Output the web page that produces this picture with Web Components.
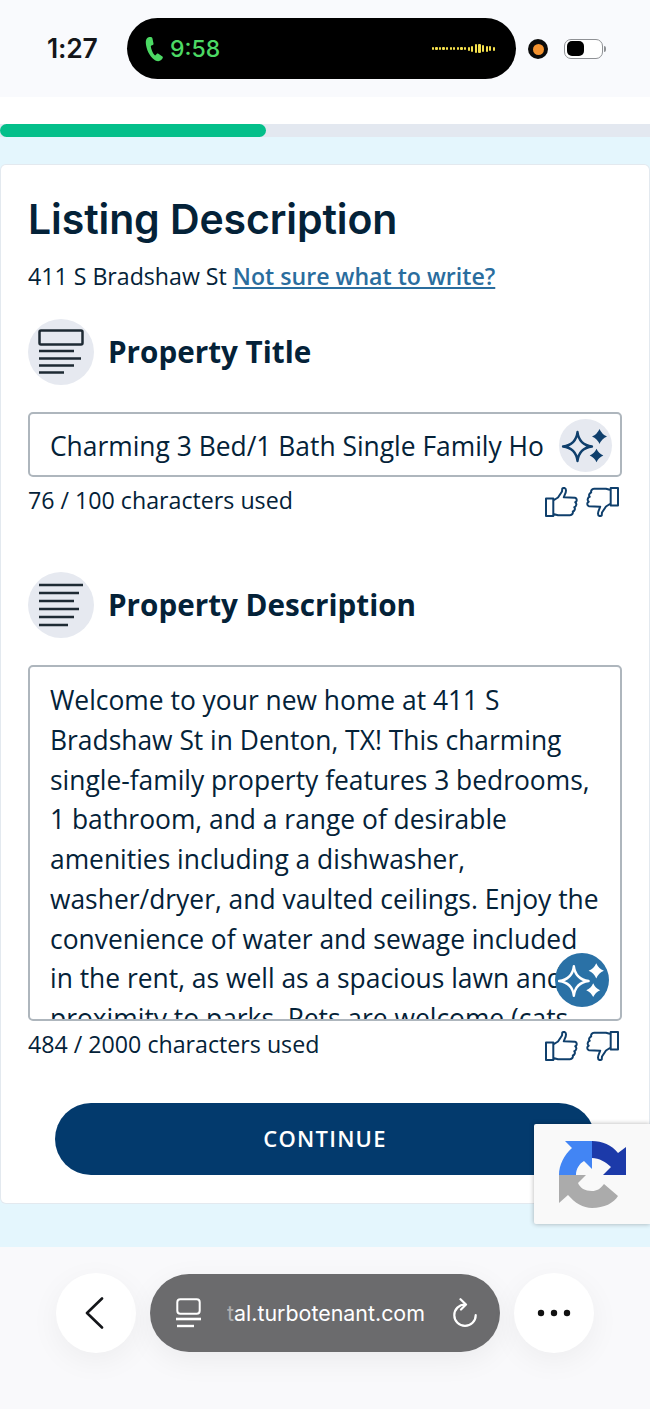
<!DOCTYPE html>
<html>
<head>
<meta charset="utf-8">
<title>Listing Description</title>
<style>
  html, body { margin: 0; padding: 0; }
  body { width: 650px; height: 1409px; overflow: hidden; position: relative; background: #e3f5fc; font-family: "Open Sans", sans-serif; color: #042238; }
</style>
</head>
<body>
<status-bar></status-bar>
<progress-strip></progress-strip>
<main-area>
  <listing-card>
    <section-head kind="title">Property Title</section-head>
    <text-box kind="single">Charming 3 Bed/1 Bath Single Family Ho</text-box>
    <feedback-row>76 / 100 characters used</feedback-row>
    <section-head kind="description" style="margin-top:51px">Property Description</section-head>
    <text-box kind="multi">Welcome to your new home at 411 S<br>Bradshaw St in Denton, TX! This charming<br>single-family property features 3 bedrooms,<br>1 bathroom, and a range of desirable<br>amenities including a dishwasher,<br>washer/dryer, and vaulted ceilings. Enjoy the<br>convenience of water and sewage included<br>in the rent, as well as a spacious lawn and<br>proximity to parks. Pets are welcome (cats</text-box>
    <feedback-row>484 / 2000 characters used</feedback-row>
    <continue-button>CONTINUE</continue-button>
  </listing-card>
</main-area>
<browser-bar></browser-bar>
<captcha-badge></captcha-badge>

<script>
// small star shape used by the AI button
function star(cx, cy, r, k) {
  const c = r * k;
  return `M${cx} ${cy - r}Q${cx + c} ${cy - c} ${cx + r} ${cy}Q${cx + c} ${cy + c} ${cx} ${cy + r}Q${cx - c} ${cy + c} ${cx - r} ${cy}Q${cx - c} ${cy - c} ${cx} ${cy - r}Z`;
}

class StatusBar extends HTMLElement {
  constructor() {
    super();
    const heights = [3,3,3,3,3,3,3,3,3,3,4,6,9,9,7,6,5,4];
    this.attachShadow({ mode: 'open' }).innerHTML = `
      <style>
        :host { display: flex; align-items: center; height: 97px; background: #f9fafd; box-sizing: border-box; padding: 0 0 0 47px; font-family: Inter, sans-serif; }
        .time { width: 80px; font-size: 26.500px; font-weight: 600; color: #14161a; margin-top: -1px; letter-spacing: -.2px; }
        .pill { width: 389px; height: 61px; margin-top: 0; background: #000; border-radius: 31px; display: flex; align-items: center; box-sizing: border-box; padding: 0 21px 0 18px; }
        .call { font-size: 23px; font-weight: 500; color: #4cd964; margin-left: 6px; }
        .wave { margin-left: auto; display: flex; align-items: center; gap: 1.300px; }
        .wave i { display: block; width: 2.300px; background: #f4e04d; border-radius: 1px; }
        .dot { width: 20px; height: 20px; border-radius: 50%; background: #0b0b0b; margin-left: 12px; display: flex; align-items: center; justify-content: center; margin-top: 1px; }
        .dot i { display: block; width: 11px; height: 11px; background: #f4922f; border-radius: 50%; }
        .battery { width: 39px; height: 20px; box-sizing: border-box; border: 1.500px solid #8f9195; border-radius: 7px; margin-left: 16px; padding: 1.500px 2px; background: #fff; }
        .battery i { display: block; width: 17px; height: 100%; background: #000; border-radius: 5px; }
        .nub { width: 2px; height: 6px; background: #8f9195; margin-left: 1px; border-radius: 0 2px 2px 0; }
      </style>
      <div class="time">1:27</div>
      <div class="pill">
        <svg width="19" height="26" viewBox="0 0 19 26"><path d="M3.500 1.200C1.600 2 .6 4 .8 7c.4 6 3.500 13 8.200 16.600 2 1.600 4.400 2 6.300 1 1.200-.6 2.200-1.800 2.500-2.800.2-.7-.1-1.100-.7-1.500l-3.700-2.500c-.7-.4-1.200-.3-1.700.2l-1 1.100c-.4.400-.8.400-1.200 0-2-2.300-3.200-5.400-3.700-8.500-.1-.5.100-.8.600-1l1.400-.6c.6-.3.800-.8.700-1.500L7.400 2.300C7.200 1 5.200.5 3.500 1.200Z" fill="#4cd964"/></svg>
        <span class="call">9:58</span>
        <div class="wave">${heights.map(h => `<i style="height:${h}px"></i>`).join('')}</div>
      </div>
      <div class="dot"><i></i></div>
      <div class="battery"><i></i></div>
      <div class="nub"></div>`;
  }
}

class ProgressStrip extends HTMLElement {
  constructor() {
    super();
    this.attachShadow({ mode: 'open' }).innerHTML = `
      <style>
        :host { display: block; background: #fff; padding-top: 27px; }
        .track { height: 13px; background: #e3e8f0; }
        .fill { width: 266px; height: 100%; background: #04bf8a; border-radius: 7px; }
      </style>
      <div class="track"><div class="fill"></div></div>`;
  }
}

class MainArea extends HTMLElement {
  constructor() {
    super();
    this.attachShadow({ mode: 'open' }).innerHTML = `
      <style>
        :host { display: block; height: 1110px; box-sizing: border-box; padding: 28px 1px 0; background: #e4f6fd; }
      </style>
      <slot></slot>`;
  }
}

class ListingCard extends HTMLElement {
  constructor() {
    super();
    this.attachShadow({ mode: 'open' }).innerHTML = `
      <style>
        :host { display: block; height: 1038px; box-sizing: border-box; padding: 24px 27px 0; background: #fff; border-radius: 5px; box-shadow: 0 0 0 1px #e3e9ef; }
        h1 { margin: 0; height: 60px; line-height: 60px; font-family: Inter, sans-serif; font-size: 41px; font-weight: 600; color: #042238; letter-spacing: -.1px; white-space: nowrap; }
        p { margin: 10px 0 26px; height: 34px; line-height: 34px; font-size: 23.150px; color: #042238; white-space: nowrap; }
        a { color: #2a6d9e; font-weight: 600; text-decoration: underline; }
      </style>
      <h1>Listing Description</h1>
      <p>411 S Bradshaw St <a>Not sure what to write?</a></p>
      <slot></slot>`;
  }
}

class SectionHead extends HTMLElement {
  constructor() {
    super();
    const title = `<rect x="11.500" y="11.500" width="43" height="14" rx="1.500" fill="none" stroke="#1e2a33" stroke-width="2.500"/>
      <path d="M11 32H46M11 39.500H53M11 46.500H46M11 53.500H36" stroke="#1e2a33" stroke-width="2.500"/>`;
    const desc = `<path d="M11 13H55M11 21H51M11 29H46M11 37H51M11 45H46M11 53H40" stroke="#1e2a33" stroke-width="2.500"/>`;
    this.attachShadow({ mode: 'open' }).innerHTML = `
      <style>
        :host { display: flex; align-items: center; gap: 14px; height: 66px; font-size: 29.650px; font-weight: 700; color: #042238; }
        svg { flex: none; }
        span { margin-top: -2px; }
      </style>
      <svg width="66" height="66" viewBox="0 0 66 66"><circle cx="33" cy="33" r="33" fill="#e6e9f0"/>${this.getAttribute('kind') === 'title' ? title : desc}</svg>
      <span><slot></slot></span>`;
  }
}

class TextBox extends HTMLElement {
  constructor() {
    super();
    const multi = this.getAttribute('kind') === 'multi';
    const ink = multi ? '#fff' : '#0f3f6c';
    this.attachShadow({ mode: 'open' }).innerHTML = `
      <style>
        :host { display: block; position: relative; margin-top: 27px; height: ${multi ? 356 : 65}px; box-sizing: border-box; border: 2px solid #aeb6bd; border-radius: 5px; background: #fff; font-size: 26.400px; color: #042238; }
        .text { box-sizing: border-box; height: 100%; overflow: hidden; white-space: nowrap; line-height: ${multi ? '39.750px' : '65px'}; padding: ${multi ? '14px 0 0 20px' : '0 0 0 20px'}; }
        button { position: absolute; border: 0; padding: 0; border-radius: 50%; display: block; background: ${multi ? '#2a71a6' : '#e6e9f0'}; right: ${multi ? 11 : 8}px; top: ${multi ? 286 : 5}px; width: ${multi ? 54 : 53}px; height: ${multi ? 54 : 53}px; }
        svg { display: block; width: 100%; height: 100%; }
      </style>
      <div class="text"><slot></slot></div>
      <button>
        <svg viewBox="-26.500 -26.500 53 53">
          <path d="${star(-8, 1, 14.500, .11)}" fill="none" stroke="${ink}" stroke-width="2.300" stroke-linejoin="round"/>
          <path d="${star(14, -9, 7.500, .3)}" fill="${ink}"/>
          <path d="${star(11, 10, 6.800, .3)}" fill="${ink}"/>
        </svg>
      </button>`;
  }
}

class FeedbackRow extends HTMLElement {
  constructor() {
    super();
    const thumb = `<path d="M1 11.500H8.300V29H1ZM8.300 13.500L13 10.500L17 4.500L17.300 1.500C19 .3 21 1 21 3.500C21 6 19.500 8 18.800 10.300L30 10.800C32.300 11.300 32.300 14.500 30.300 15.300C32 16.300 31.500 19.700 29.300 20.200C30.500 21.500 29.800 24 27.800 24.500C28.300 26 27.300 28.200 25 28.200L13 28.200L8.300 27" fill="none" stroke="#0f3f6c" stroke-width="2" stroke-linejoin="round"/>`;
    this.attachShadow({ mode: 'open' }).innerHTML = `
      <style>
        :host { display: flex; align-items: center; justify-content: space-between; height: 40px; margin-top: 4px; font-size: 23.200px; color: #042238; }
        .label { margin-top: -2px; }
        .icons { display: flex; gap: 6px; margin-right: 3px; margin-top: 1px; }
        svg { display: block; }
      </style>
      <span class="label"><slot></slot></span>
      <div class="icons">
        <svg width="34" height="30" viewBox="0 0 34 30">${thumb}</svg>
        <svg width="34" height="30" viewBox="0 0 34 30" style="transform: rotate(180deg)">${thumb}</svg>
      </div>`;
  }
}

class ContinueButton extends HTMLElement {
  constructor() {
    super();
    this.attachShadow({ mode: 'open' }).innerHTML = `
      <style>
        :host { display: flex; align-items: center; justify-content: center; height: 72px; margin: 38px 27px 0; background: #033a6d; border-radius: 36px; color: #fff; font-size: 22px; font-weight: 600; letter-spacing: 1.250px; }
        span { margin-top: -2px; }
      </style>
      <span><slot></slot></span>`;
  }
}

class BrowserBar extends HTMLElement {
  constructor() {
    super();
    this.attachShadow({ mode: 'open' }).innerHTML = `
      <style>
        :host { display: flex; align-items: flex-start; gap: 14px; box-sizing: border-box; height: 162px; padding: 26px 0 0 56px; background: #f9f9fb; font-family: Inter, sans-serif; }
        .round { width: 80px; height: 80px; border-radius: 50%; background: #fff; box-shadow: 0 8px 30px rgba(0,0,0,.05); display: flex; align-items: center; justify-content: center; flex: none; }
        .url { width: 350px; height: 78px; margin-top: 1px; border-radius: 39px; background: #6b6b6d; box-shadow: 0 8px 30px rgba(0,0,0,.06); display: flex; align-items: center; box-sizing: border-box; padding: 0 22px 0 26px; color: #fff; font-size: 21.400px; flex: none; }
        .host { margin-left: 26px; margin-top: -1px; }
        .fade { opacity: .45; }
        .reload { margin-left: auto; }
        svg { display: block; }
        .back { margin-left: -5px; }
      </style>
      <div class="round">
        <svg class="back" width="20" height="32" viewBox="0 0 20 32"><path d="M18 1.500L3 16L18 30.500" fill="none" stroke="#14161a" stroke-width="2.600" stroke-linecap="round" stroke-linejoin="round"/></svg>
      </div>
      <div class="url">
        <svg width="25" height="30" viewBox="0 0 25 30"><rect x="1.300" y="1.300" width="22.400" height="14.400" rx="3" fill="none" stroke="#fff" stroke-width="2"/><path d="M0 21H25" stroke="#fff" stroke-width="2.600"/><path d="M1 28H18" stroke="#fff" stroke-width="2.400"/></svg>
        <span class="host"><span class="fade">t</span>al.turbotenant.com</span>
        <svg class="reload" width="26" height="30" viewBox="0 0 26 30"><path d="M13 6.500A10.700 10.700 0 1 0 23.700 17.200M8.500 1.200L14 6.500L9 11.500" fill="none" stroke="#fff" stroke-width="2.200" stroke-linecap="round" stroke-linejoin="round"/></svg>
      </div>
      <div class="round">
        <svg width="34" height="8" viewBox="0 0 34 8"><circle cx="4" cy="4" r="3.200" fill="#111"/><circle cx="17" cy="4" r="3.200" fill="#111"/><circle cx="30" cy="4" r="3.200" fill="#111"/></svg>
      </div>`;
  }
}

class CaptchaBadge extends HTMLElement {
  constructor() {
    super();
    this.attachShadow({ mode: 'open' }).innerHTML = `
      <style>
        :host { position: absolute; left: 534px; top: 1124px; width: 116px; height: 100px; background: #f9f9f9; border-radius: 2px 0 0 2px; box-shadow: 0 0 5px rgba(0,0,0,.3); display: block; }
        svg { position: absolute; left: 23px; top: 16px; }
      </style>
      <svg width="70" height="70" viewBox="-35 -35 70 70">
        <path d="M0 -34C10 -34 20 -30 26 -22L34 -28V0H11L19 -8C14 -13 7 -17 0 -17Z" fill="#1c3aa9"/>
        <path d="M0 -34H-27L-20 -27C-28 -20 -33 -10 -33 0H-16C-16 -6 -13 -11 -8 -14L0 -6Z" fill="#4285f4"/>
        <path d="M-33 0V28L-24 20C-17 28 -9 33 0 33C12 33 22 28 26 21L12 9C8 14 5 16 0 16C-7 16 -12 13 -14 8L-6 0Z" fill="#ababab"/>
      </svg>`;
  }
}

customElements.define('status-bar', StatusBar);
customElements.define('progress-strip', ProgressStrip);
customElements.define('main-area', MainArea);
customElements.define('listing-card', ListingCard);
customElements.define('section-head', SectionHead);
customElements.define('text-box', TextBox);
customElements.define('feedback-row', FeedbackRow);
customElements.define('continue-button', ContinueButton);
customElements.define('browser-bar', BrowserBar);
customElements.define('captcha-badge', CaptchaBadge);
</script>
</body>
</html>
